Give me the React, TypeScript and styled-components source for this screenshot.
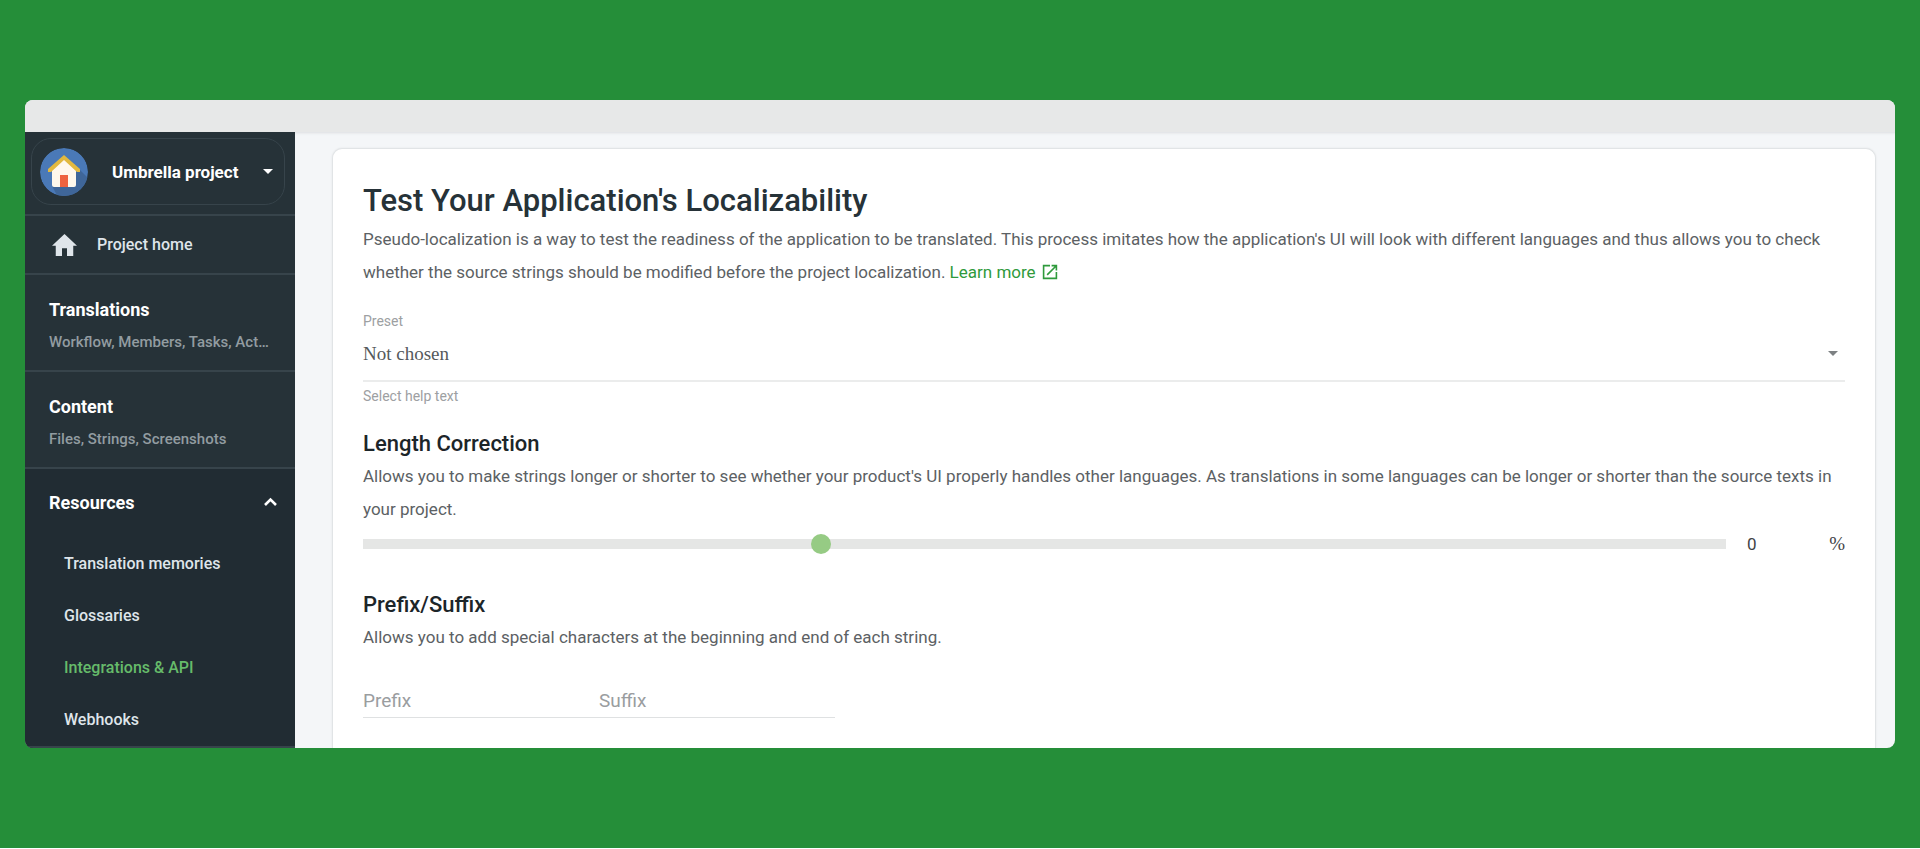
import React, { useState } from "react";
import styled, { createGlobalStyle } from "styled-components";

const GlobalStyle = createGlobalStyle`
  *, *::before, *::after { box-sizing: border-box; }
  body {
    margin: 0;
    background: #fff;
    color: #263238;
    font-family: Roboto, "Liberation Sans", sans-serif;
  }
  h1, h2, h3, p, ul { margin: 0; padding: 0; }
  a { text-decoration: none; }
`;

const Page = styled.div`
  min-height: calc(100vh - 1px);
  padding: 100px 25px;
  background: #258e39;
`;

const Frame = styled.div`
  border-radius: 8px;
  overflow: hidden;
  background: #f4f6f8;
`;

const TitleBar = styled.div`
  height: 32px;
  background: #e7e8e8;
`;

const Body = styled.div`
  display: flex;
`;

const Sidebar = styled.nav`
  flex: none;
  width: 270px;
  background: #263238;
`;

const ProjectArea = styled.div`
  padding: 6px 10px 9px 6px;
  border-bottom: 2px solid #37444b;
`;

const ProjectButton = styled.button`
  display: flex;
  align-items: center;
  width: 100%;
  height: 67px;
  padding: 0 11px 0 8px;
  border: 1px solid #37444b;
  border-radius: 20px;
  background: none;
  color: #fff;
  font: 700 17px Roboto, sans-serif;
  text-align: left;

  span {
    flex: 1;
    padding-left: 24px;
  }
`;

const HomeLink = styled.a`
  display: flex;
  align-items: center;
  gap: 20px;
  height: 59px;
  padding: 0 27px;
  border-bottom: 2px solid #37444b;
  color: #dfe5ea;
  font-size: 16px;
  font-weight: 500;
`;

const Group = styled.a`
  display: block;
  height: 97px;
  padding: 23px 24px 0;
  border-bottom: 2px solid #37444b;
`;

const GroupTitle = styled.span`
  display: block;
  color: #fff;
  font-size: 18px;
  font-weight: 700;
  line-height: 24px;
`;

const GroupNote = styled.span`
  display: block;
  margin-top: 8px;
  overflow: hidden;
  color: #929ca1;
  font-size: 15px;
  font-weight: 500;
  line-height: 24px;
  text-overflow: ellipsis;
  white-space: nowrap;
`;

const OpenGroup = styled.div`
  padding-bottom: 1px;
  border-bottom: 2px solid #37444b;
  background: #212c33;
`;

const OpenGroupButton = styled.button`
  display: flex;
  align-items: center;
  justify-content: space-between;
  width: 100%;
  height: 68px;
  padding: 0 18px 0 24px;
  border: 0;
  background: none;
  color: #fff;
  font: inherit;
`;

const ItemList = styled.ul`
  list-style: none;
`;

const Item = styled.a<{ $active?: boolean }>`
  display: flex;
  align-items: center;
  height: 52px;
  padding-left: 39px;
  color: ${(p) => (p.$active ? "#66bb6a" : "#dfe5ea")};
  font-size: 16px;
  font-weight: 500;
`;

const Main = styled.main`
  display: flex;
  flex: 1;
  min-width: 0;
  padding: 16px 19px 0 37px;
  box-shadow: inset 0 3px 3px -2px #dcdee0;
`;

const Card = styled.section`
  flex: 1;
  min-width: 0;
  padding: 30px 30px 0;
  border: 1px solid #e1e4e6;
  border-bottom: 0;
  border-radius: 10px 10px 0 0;
  box-shadow: 0 0 2px #dfe2e4;
  background: #fff;
`;

const Title = styled.h1`
  font-size: 31px;
  font-weight: 500;
  line-height: 44px;
`;

const Heading = styled.h2`
  color: #1c2529;
  font-size: 22px;
  font-weight: 500;
  line-height: 32px;
`;

const Text = styled.p`
  color: #5c6164;
  font-size: 17px;
  line-height: 33px;
`;

const LearnMore = styled.a`
  display: inline-flex;
  align-items: center;
  gap: 6px;
  color: #2f9a3c;
  line-height: 24px;
`;

const Field = styled.div`
  display: flex;
  flex-direction: column;
  gap: 2px;
  margin-top: 20px;
`;

const Small = styled.span`
  color: #9da0a2;
  font-size: 14px;
  line-height: 24px;
`;

const SelectBox = styled.div`
  display: flex;
  align-items: center;
  height: 47px;
  padding: 0 7px 8px 0;
  border-bottom: 2px solid #ebecec;
`;

const Select = styled.select`
  flex: 1;
  height: 32px;
  padding: 0;
  border: 0;
  appearance: none;
  background: none;
  color: #55595b;
  font: 19px "Liberation Serif", serif;
`;

const SliderRow = styled.div`
  display: flex;
  align-items: center;
  height: 27px;
  margin: 4px 0 32px;
`;

const Slider = styled.input`
  flex: 1;
  min-width: 0;
  height: 20px;
  margin: 0;
  appearance: none;
  background: linear-gradient(#e5e6e5, #e5e6e5) center / 100% 10px no-repeat;

  &::-webkit-slider-thumb {
    width: 20px;
    height: 20px;
    border-radius: 50%;
    appearance: none;
    background: #96cb84;
  }
`;

const Amount = styled.input`
  width: 60px;
  margin-left: 21px;
  padding: 0;
  border: 0;
  background: none;
  color: #3f4346;
  font: 17px Roboto, sans-serif;
`;

const Percent = styled.span`
  width: 38px;
  color: #3f4346;
  font: 19px "Liberation Serif", serif;
  text-align: right;
`;

const Section = styled.section`
  margin-top: 20px;
`;

const Affixes = styled.div`
  display: flex;
  margin-top: 29px;
`;

const AffixInput = styled.input`
  width: 236px;
  height: 35px;
  padding: 0;
  border: 0;
  border-bottom: 1px solid #dfe1e2;
  background: none;
  color: #55595b;
  font: 19px Roboto, sans-serif;

  &::placeholder {
    color: #9a9d9f;
  }
`;

const Avatar = () => (
  <svg width="48" height="48" viewBox="0 0 48 48" aria-hidden="true">
    <defs>
      <clipPath id="disc">
        <circle cx="24" cy="24" r="24" />
      </clipPath>
    </defs>
    <g clipPath="url(#disc)">
      <circle cx="24" cy="24" r="24" fill="#4a79b7" />
      <path d="M40 22L60 42V60H24L12 38Z" fill="#3f6699" />
      <path d="M24 9L36 21V37Q36 39 34 39H14Q12 39 12 37V21Z" fill="#fff8ec" />
      <rect x="20" y="27" width="8" height="12" fill="#ee6340" />
      <path d="M24 7L40 21V24H37L24 12L11 24H8V21Z" fill="#e2b93f" />
    </g>
  </svg>
);

const HomeIcon = () => (
  <svg width="25" height="22" viewBox="2 3 20 17" preserveAspectRatio="none" fill="currentColor" aria-hidden="true">
    <path d="M10 20v-6h4v6h5v-8h3L12 3 2 12h3v8z" />
  </svg>
);

const Caret = ({ color }: { color: string }) => (
  <svg width="10" height="5" viewBox="0 0 10 5" fill={color} aria-hidden="true">
    <path d="M0 0h10L5 5z" />
  </svg>
);

const Chevron = () => (
  <svg width="13" height="12" viewBox="0 0 13 12" fill="none" stroke="#fff" strokeWidth="2.6" aria-hidden="true">
    <path d="M1 8l5.500-5.500L12 8" />
  </svg>
);

const ExternalIcon = () => (
  <svg width="16" height="16" viewBox="2 2 20 20" fill="currentColor" aria-hidden="true">
    <path d="M19 19H5V5h7V3H3v18h18v-9h-2v7zM14 3v2h3.590l-9.830 9.830 1.410 1.410L19 6.410V10h2V3h-7z" />
  </svg>
);

const resources = ["Translation memories", "Glossaries", "Integrations & API", "Webhooks"];

export default function App() {
  const [length, setLength] = useState("0");

  return (
    <>
      <GlobalStyle />
      <Page>
        <Frame>
          <TitleBar />
          <Body>
            <Sidebar>
              <ProjectArea>
                <ProjectButton type="button">
                  <Avatar />
                  <span>Umbrella project</span>
                  <Caret color="#fff" />
                </ProjectButton>
              </ProjectArea>
              <HomeLink href="#home">
                <HomeIcon />
                Project home
              </HomeLink>
              <Group href="#translations">
                <GroupTitle>Translations</GroupTitle>
                <GroupNote>Workflow, Members, Tasks, Activity</GroupNote>
              </Group>
              <Group href="#content">
                <GroupTitle>Content</GroupTitle>
                <GroupNote>Files, Strings, Screenshots</GroupNote>
              </Group>
              <OpenGroup>
                <OpenGroupButton type="button" aria-expanded="true">
                  <GroupTitle>Resources</GroupTitle>
                  <Chevron />
                </OpenGroupButton>
                <ItemList>
                  {resources.map((name) => (
                    <li key={name}>
                      <Item href="#resources" $active={name === "Integrations & API"}>
                        {name}
                      </Item>
                    </li>
                  ))}
                </ItemList>
              </OpenGroup>
            </Sidebar>
            <Main>
              <Card>
                <Title>Test Your Application's Localizability</Title>
                <Text>
                  Pseudo-localization is a way to test the readiness of the application to be translated. This process
                  imitates how the application's UI will look with different languages and thus allows you to check
                  whether the source strings should be modified before the project localization.{" "}
                  <LearnMore href="#learn-more">
                    Learn more
                    <ExternalIcon />
                  </LearnMore>
                </Text>
                <Field>
                  <Small as="label" htmlFor="preset">
                    Preset
                  </Small>
                  <SelectBox>
                    <Select id="preset">
                      <option>Not chosen</option>
                    </Select>
                    <Caret color="#7d8183" />
                  </SelectBox>
                  <Small>Select help text</Small>
                </Field>
                <Section>
                  <Heading id="length">Length Correction</Heading>
                  <Text>
                    Allows you to make strings longer or shorter to see whether your product's UI properly handles other
                    languages. As translations in some languages can be longer or shorter than the source texts in your
                    project.
                  </Text>
                  <SliderRow>
                    <Slider
                      type="range"
                      min="-50"
                      max="100"
                      value={length}
                      onChange={(e) => setLength(e.target.value)}
                      aria-labelledby="length"
                    />
                    <Amount value={length} onChange={(e) => setLength(e.target.value)} aria-labelledby="length" />
                    <Percent>%</Percent>
                  </SliderRow>
                </Section>
                <Section>
                  <Heading>Prefix/Suffix</Heading>
                  <Text>Allows you to add special characters at the beginning and end of each string.</Text>
                  <Affixes>
                    <AffixInput placeholder="Prefix" aria-label="Prefix" />
                    <AffixInput placeholder="Suffix" aria-label="Suffix" />
                  </Affixes>
                </Section>
              </Card>
            </Main>
          </Body>
        </Frame>
      </Page>
    </>
  );
}
